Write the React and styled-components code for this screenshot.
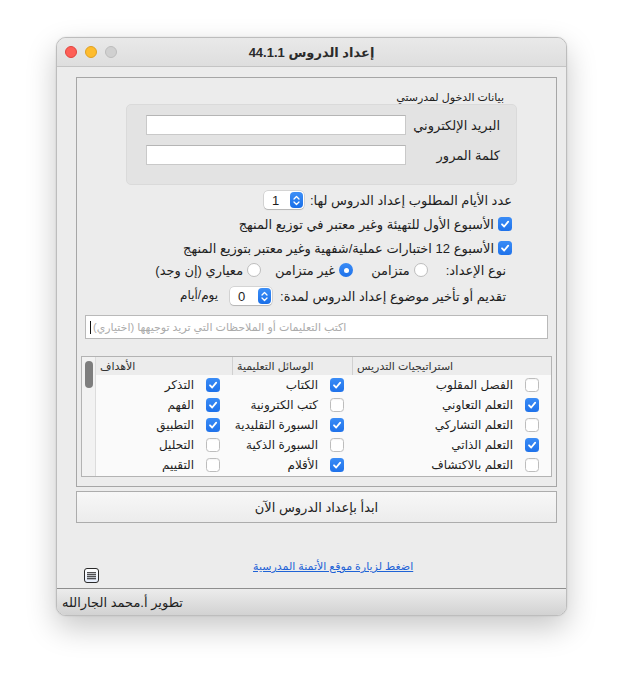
import React, { useState } from "react";
import styled, { createGlobalStyle } from "styled-components";

const FONT = `"Liberation Sans", "DejaVu Sans", sans-serif`;

const GlobalStyle = createGlobalStyle`
  body {
    margin: 0;
    background: #ffffff;
    font-family: ${FONT};
    color: #1e1e1e;
  }
`;

const Page = styled.div`
  padding: 37px 0 0 56px;
  height: 690px;
  box-sizing: border-box;
`;

const Window = styled.div`
  width: 511px;
  height: 579px;
  box-sizing: border-box;
  border-radius: 10px;
  border: 1px solid #bdbdbd;
  background: #ececec;
  box-shadow: 0 12px 30px rgba(0, 0, 0, 0.22), 0 0 2px rgba(0, 0, 0, 0.12);
  display: flex;
  flex-direction: column;
  overflow: hidden;
`;

const TitleBar = styled.div`
  height: 28px;
  flex: none;
  display: flex;
  align-items: center;
  padding-left: 8px;
  background: linear-gradient(#e9e9e9, #dedede);
  border-bottom: 1px solid #c4c4c4;
`;

const Lights = styled.div`
  display: flex;
  gap: 8px;
  width: 60px;
`;

const Light = styled.span`
  width: 12px;
  height: 12px;
  border-radius: 50%;
  box-sizing: border-box;
  background: ${(p) => p.$c};
  border: 1px solid ${(p) => p.$b};
`;

const Title = styled.div`
  flex: 1;
  margin-right: 68px;
  text-align: center;
  direction: rtl;
  font-weight: bold;
  font-size: 13px;
  color: #2b2b2b;
`;

const Content = styled.div`
  flex: 1;
  display: flex;
  flex-direction: column;
  padding: 10px 9px 0 19px;
`;

const GroupBox = styled.div`
  height: 410px;
  box-sizing: border-box;
  border: 1px solid #a6a6a6;
  direction: rtl;
  display: flex;
  flex-direction: column;
`;

const LoginLabel = styled.div`
  font-size: 11px;
  margin: 12px 52px 0 0;
  height: 14px;
  line-height: 14px;
`;

const LoginBox = styled.div`
  margin: 0 39px 0 0;
  width: 391px;
  height: 81px;
  box-sizing: border-box;
  background: #e3e3e3;
  border: 1px solid #dadada;
  border-radius: 5px;
  padding: 10px 16px 0 0;
  display: flex;
  flex-direction: column;
  gap: 10px;
`;

const FieldRow = styled.div`
  display: flex;
  align-items: center;
`;

const FieldLabel = styled.div`
  width: 94px;
  font-size: 13px;
`;

const TextInput = styled.div`
  width: 260px;
  height: 20px;
  box-sizing: border-box;
  background: #fff;
  border: 1px solid #c9c9c9;
  border-top-color: #b5b5b5;
`;

const Row = styled.div`
  display: flex;
  align-items: center;
  height: 20px;
  margin: ${(p) => p.$top}px ${(p) => p.$right}px 0 0;
  font-size: 13px;
  gap: ${(p) => p.$gap || 0}px;
`;

const Stepper = styled.div`
  direction: ltr;
  width: ${(p) => p.$w}px;
  height: 18px;
  box-sizing: border-box;
  background: #fff;
  border-radius: 4px;
  box-shadow: 0 0 0 0.5px rgba(0, 0, 0, 0.2), 0 1px 1px rgba(0, 0, 0, 0.15);
  display: flex;
  align-items: center;
  justify-content: space-between;
  padding: 0 1px 0 8px;
  font-size: 13px;
`;

const StepButton = styled.span`
  width: 13px;
  height: 16px;
  border-radius: 4px;
  background: linear-gradient(#3d8ff7, #1a6fe8);
  display: flex;
  align-items: center;
  justify-content: center;
`;

const Box = styled.span`
  width: 14px;
  height: 14px;
  flex: none;
  box-sizing: border-box;
  border-radius: 3.5px;
  display: inline-flex;
  align-items: center;
  justify-content: center;
  background: ${(p) => (p.$on ? "linear-gradient(#3a8cf6, #1f72ea)" : "#ffffff")};
  border: ${(p) => (p.$on ? "none" : "1px solid #bdbdbd")};
  box-shadow: ${(p) => (p.$on ? "none" : "inset 0 1px 1px rgba(0,0,0,0.04)")};
`;

const Radio = styled.span`
  width: 14px;
  height: 14px;
  flex: none;
  box-sizing: border-box;
  border-radius: 50%;
  display: inline-flex;
  align-items: center;
  justify-content: center;
  background: ${(p) => (p.$on ? "linear-gradient(#3a8cf6, #1f72ea)" : "#ffffff")};
  border: ${(p) => (p.$on ? "none" : "1px solid #bdbdbd")};
  &::after {
    content: "";
    width: 5px;
    height: 5px;
    border-radius: 50%;
    background: #fff;
    display: ${(p) => (p.$on ? "block" : "none")};
  }
`;

const Option = styled.label`
  display: flex;
  align-items: center;
  gap: 4px;
  margin-right: ${(p) => p.$gap}px;
`;

const Unit = styled.span`
  font-size: 12px;
  margin-right: 4px;
  margin-bottom: 3px;
`;

const Notes = styled.div`
  direction: ltr;
  margin: 9px 8px 0 8px;
  height: 24px;
  box-sizing: border-box;
  background: #fff;
  border: 1px solid #b9b9b9;
  display: flex;
  align-items: center;
  padding-left: 4px;
  font-size: 11px;
  color: #ababab;
`;

const Caret = styled.span`
  width: 1px;
  height: 13px;
  background: #111;
  margin-right: 2px;
`;

const Table = styled.div`
  direction: ltr;
  margin: 17px 4px 0 4px;
  height: 121px;
  box-sizing: border-box;
  border: 1px solid #b3b3b3;
  display: flex;
  background: #fafafa;
`;

const ScrollTrack = styled.div`
  width: 14px;
  flex: none;
  background: #f2f2f2;
  border-right: 1px solid #dcdcdc;
  padding: 4px 0 0 3px;
  box-sizing: border-box;
`;

const Thumb = styled.div`
  width: 8px;
  height: 27px;
  border-radius: 4px;
  background: #7e7e7e;
`;

const Grid = styled.div`
  flex: 1;
  display: grid;
  grid-template-columns: 136px 120px 1fr;
  grid-auto-rows: 20px;
  grid-template-rows: 18px;
`;

const Head = styled.div`
  background: #ececec;
  font-size: 11px;
  display: flex;
  align-items: center;
  padding-left: 4px;
  border-left: ${(p) => (p.$first ? "none" : "1px solid #d0d0d0")};
  color: #333;
  height: 18px;
  box-sizing: border-box;
`;

const Cell = styled.div`
  direction: rtl;
  display: flex;
  align-items: center;
  gap: 12px;
  padding-right: ${(p) => p.$pad}px;
  font-size: 12px;
`;

const StartButton = styled.button`
  margin-top: 4px;
  height: 32px;
  width: 481px;
  box-sizing: border-box;
  border: 1px solid #acacac;
  background: linear-gradient(#f7f7f7, #ececec);
  font-family: ${FONT};
  font-size: 13px;
  color: #222;
  direction: rtl;
  padding: 0;
`;

const Footer = styled.div`
  flex: 1;
  display: flex;
  align-items: flex-end;
  padding: 0 0 5px 8px;
`;

const DocIcon = styled.span`
  width: 15px;
  height: 15px;
  box-sizing: border-box;
  border: 1px solid #2a2a2a;
  border-radius: 3px;
  background: linear-gradient(#ffffff, #e6eefc);
  display: flex;
  align-items: center;
  justify-content: center;
`;

const Link = styled.a`
  margin: 0 0 10px 154px;
  font-size: 11px;
  color: #1f63d6;
  text-decoration: underline;
  direction: rtl;
`;

const StatusBar = styled.div`
  height: 26px;
  flex: none;
  border-top: 1px solid #8e8e8e;
  background: linear-gradient(#ececec, #d2d2d2);
  display: flex;
  align-items: center;
  padding-left: 5px;
  font-size: 13px;
  color: #1e1e1e;
  direction: ltr;
`;

function Check({ on }) {
  return (
    <Box $on={on}>
      {on && (
        <svg width="10" height="10" viewBox="0 0 10 10">
          <path d="M2 5.3 L4.2 7.5 L8.2 2.6" fill="none" stroke="#fff" strokeWidth="1.8" strokeLinecap="round" strokeLinejoin="round" />
        </svg>
      )}
    </Box>
  );
}

function Spin({ value, w }) {
  return (
    <Stepper $w={w}>
      <span>{value}</span>
      <StepButton>
        <svg width="7" height="11" viewBox="0 0 7 11">
          <path d="M1 4 L3.5 1.5 L6 4 M1 7 L3.5 9.5 L6 7" fill="none" stroke="#fff" strokeWidth="1.3" strokeLinecap="round" strokeLinejoin="round" />
        </svg>
      </StepButton>
    </Stepper>
  );
}

const rows = [
  [["التذكر", true], ["الكتاب", true], ["الفصل المقلوب", false]],
  [["الفهم", true], ["كتب الكترونية", false], ["التعلم التعاوني", true]],
  [["التطبيق", true], ["السبورة التقليدية", true], ["التعلم التشاركي", false]],
  [["التحليل", false], ["السبورة الذكية", false], ["التعلم الذاتي", true]],
  [["التقييم", false], ["الأقلام", true], ["التعلم بالاكتشاف", false]],
];

const cellPad = [12, 8, 12];

export default function App() {
  const [mode] = useState("async");

  return (
    <Page>
      <GlobalStyle />
      <Window>
        <TitleBar>
          <Lights>
            <Light $c="#fe5f57" $b="#e0443e" />
            <Light $c="#febc2e" $b="#dea123" />
            <Light $c="#d0d0d0" $b="#bcbcbc" />
          </Lights>
          <Title>إعداد الدروس 44.1.1</Title>
        </TitleBar>

        <Content>
          <GroupBox>
            <LoginLabel>بيانات الدخول لمدرستي</LoginLabel>
            <LoginBox>
              <FieldRow>
                <FieldLabel>البريد الإلكتروني</FieldLabel>
                <TextInput />
              </FieldRow>
              <FieldRow>
                <FieldLabel>كلمة المرور</FieldLabel>
                <TextInput />
              </FieldRow>
            </LoginBox>

            <Row $top={5} $right={44} $gap={6}>
              <span>عدد الأيام المطلوب إعداد الدروس لها:</span>
              <Spin value="1" w={40} />
            </Row>
            <Row $top={4} $right={44} $gap={4}>
              <Check on />
              <span>الأسبوع الأول للتهيئة وغير معتبر في توزيع المنهج</span>
            </Row>
            <Row $top={4} $right={44} $gap={4}>
              <Check on />
              <span>الأسبوع 12 اختبارات عملية/شفهية وغير معتبر بتوزيع المنهج</span>
            </Row>
            <Row $top={2} $right={50}>
              <span>نوع الإعداد:</span>
              <Option $gap={18}>
                <Radio $on={mode === "sync"} />
                <span>متزامن</span>
              </Option>
              <Option $gap={18}>
                <Radio $on={mode === "async"} />
                <span>غير متزامن</span>
              </Option>
              <Option $gap={14}>
                <Radio $on={mode === "std"} />
                <span>معياري (إن وجد)</span>
              </Option>
            </Row>
            <Row $top={6} $right={50} $gap={8}>
              <span>تقديم أو تأخير موضوع إعداد الدروس لمدة:</span>
              <Spin value="0" w={42} />
              <Unit>يوم/أيام</Unit>
            </Row>

            <Notes>
              <Caret />
              <span>اكتب التعليمات أو الملاحظات التي تريد توجيهها (اختياري)</span>
            </Notes>

            <Table>
              <ScrollTrack>
                <Thumb />
              </ScrollTrack>
              <Grid>
                <Head $first>الأهداف</Head>
                <Head>الوسائل التعليمية</Head>
                <Head>استراتيجيات التدريس</Head>
                {rows.map((r, i) =>
                  r.map(([label, on], j) => (
                    <Cell key={`${i}-${j}`} $pad={cellPad[j]}>
                      <Check on={on} />
                      <span>{label}</span>
                    </Cell>
                  ))
                )}
              </Grid>
            </Table>
          </GroupBox>

          <StartButton>ابدأ بإعداد الدروس الآن</StartButton>

          <Footer>
            <DocIcon>
              <svg width="9" height="8" viewBox="0 0 9 8">
                <path d="M0 0.75 H9 M0 2.75 H9 M0 4.75 H9 M0 6.75 H9" stroke="#1a1a1a" strokeWidth="1.1" />
              </svg>
            </DocIcon>
            <Link>اضغط لزيارة موقع الأتمنة المدرسية</Link>
          </Footer>
        </Content>

        <StatusBar>تطوير أ.محمد الجارالله</StatusBar>
      </Window>
    </Page>
  );
}
